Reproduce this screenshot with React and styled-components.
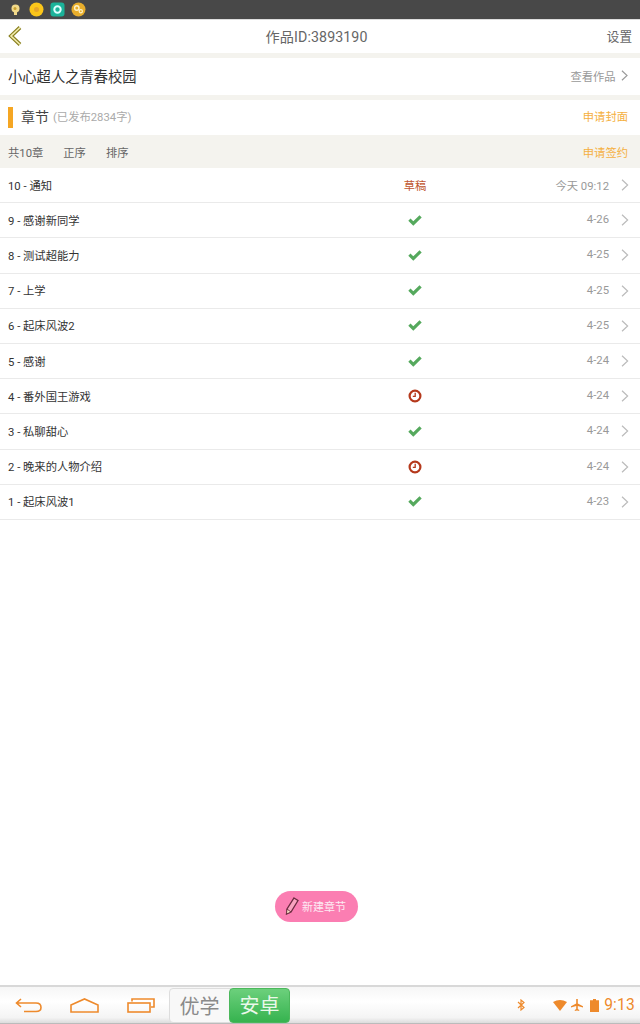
import React from "react";
import styled, { createGlobalStyle } from "styled-components";

const Global = createGlobalStyle`
  html, body { margin: 0; padding: 0; background: #fff; }
  body { font-family: Roboto, "Noto Sans CJK SC", sans-serif; }
`;
const Page = styled.div`
  width: 640px; height: 1024px; display: flex; flex-direction: column; overflow: hidden; background: #fff; position: relative;
`;
const StatusBar = styled.div`
  height: 19px; background: #484848; display: flex; align-items: center; gap: 6px; padding-left: 8px; box-sizing: border-box;
  flex: none;
`;
const NavBar = styled.div`
  height: 34px; flex: none; display: grid; grid-template-columns: 60px 1fr 67px; align-items: center; background: #fff;
  border-top: 1px solid #ddd; box-sizing: border-box; padding-bottom: 2px;
`;
const BackCell = styled.div`
  padding-left: 8px; display: flex; align-items: center;
`;
const NavTitle = styled.div`
  text-align: center; color: #666; font-size: 14.2px; letter-spacing: 0.1px;
`;
const NavAction = styled.div`
  text-align: right; padding-right: 8px; color: #666; font-size: 12.6px;
`;
const Band = styled.div`
  height: 5px; flex: none; background: #f4f3ee;
`;
const BookRow = styled.div`
  height: 37px; flex: none; display: flex; align-items: center; justify-content: space-between; padding: 0 12px 2px 8px; box-sizing: border-box;
`;
const BookTitle = styled.div`
  font-size: 14.3px; color: #333;
`;
const BookLink = styled.div`
  display: flex; align-items: center; gap: 5px; font-size: 11.3px; color: #999;
`;
const SectionHead = styled.div`
  height: 35px; flex: none; display: flex; align-items: center; padding: 0 12px 3px 8px; box-sizing: border-box;
`;
const Accent = styled.div`
  width: 5px; height: 21px; background: #f5a623; margin: 3px 8px 0 0;
`;
const SectionTitle = styled.span`
  font-size: 14px; color: #444;
`;
const SectionNote = styled.span`
  font-size: 11.3px; color: #aaa; margin-left: 4px; flex: 1;
`;
const Highlight = styled.span`
  font-size: 11.3px; color: #f5b041;
`;
const ToolHighlight = styled(Highlight)`
  margin-left: auto;
`;
const Toolbar = styled.div`
  height: 33px; flex: none; background: #f4f3ee; display: flex; align-items: center; padding: 0 12px 0 8px; box-sizing: border-box;
  font-size: 11.3px; color: #666; gap: 20px;
`;
const Row = styled.div`
  height: 35.2px; box-sizing: border-box; flex: none; display: grid; grid-template-columns: 364px 86px 1fr 31px; align-items: center;
  border-bottom: 1px solid #eaeaea; padding-left: 8px;
`;
const RowTitle = styled.div`
  font-size: 11.3px; color: #333; padding-bottom: 1px;
`;
const RowState = styled.div`
  display: flex; justify-content: center;
`;
const DraftLabel = styled.span`
  font-size: 11.3px; color: #c0562f; padding-bottom: 1px;
`;
const RowDate = styled.div`
  text-align: right; font-size: 11.3px; color: #999; padding-bottom: 1px;
`;
const RowChevron = styled.div`
  display: flex; justify-content: flex-end; padding-right: 11px;
`;
const Spacer = styled.div`
  flex: 1;
`;
const Fab = styled.div`
  position: absolute; left: 275px; top: 891px; width: 83px; height: 31px; border-radius: 16px; background: #fb7eb2;
  display: flex; align-items: center; gap: 3px; padding: 0 0 1px 10px; box-sizing: border-box; color: #fdeaf2; font-size: 11px;
`;
const BottomBar = styled.div`
  height: 39px; flex: none; display: flex; align-items: center; box-sizing: border-box; position: relative;
  border-top: 2px solid #d8d8d8; border-bottom: 1px solid #bbb;
  background: linear-gradient(#f6f6f6, #ffffff 40%, #f4f4f4 85%, #dcdcdc);
`;
const SysIcons = styled.div`
  display: flex; align-items: center; width: 169px; padding-left: 15px; box-sizing: border-box;
`;
const SysSlot = styled.div`
  width: 55px; display: flex; align-items: center;
`;
const SysLast = styled.div`
  margin-left: 2px; display: flex; align-items: center;
`;
const Switcher = styled.div`
  height: 35px; width: 121px; box-sizing: border-box; border: 1px solid #ddd; border-radius: 4px; display: flex; align-items: center;
  background: #f8f8f8; margin-top: 1px;
`;
const SwitchLabel = styled.div`
  width: 59px; text-align: center; font-size: 20px; color: #8a8a8a; flex: none;
`;
const SwitchActive = styled.div`
  width: 61px; height: 35px; text-align: center; line-height: 34px; font-size: 20px; color: #eaf8ea; flex: none; border-radius: 4px;
  background: linear-gradient(#6cd07c, #36b34f); border: 1px solid #4cb85c; box-sizing: border-box;
`;
const Tray = styled.div`
  margin-left: auto; display: flex; align-items: center; padding-right: 5px; color: #ee8a2c; font-size: 15.6px;
`;
const Clock = styled.span`
  margin-left: 5px; letter-spacing: 0.2px;
`;
const Chevron = ({ color = "#bbb", size = 12 }) => (
  <svg width={size * 0.67} height={size} viewBox="0 0 8 12" fill="none" stroke={color} strokeWidth="1.2"><path d="M1 0.8 L6.6 6 L1 11.2" /></svg>
);
const Check = () => (
  <svg width="14" height="11" viewBox="0 0 14 11" fill="#55a95d"><path d="M0.3 5.8 L2.5 3.6 L5.3 6.3 L11.5 0.3 L13.7 2.5 L5.3 10.7Z" /></svg>
);
const ClockIcon = () => (
  <svg width="14" height="14" viewBox="0 0 14 14" fill="none" stroke="#b5391c"><circle cx="7" cy="7" r="5.4" strokeWidth="2.2" /><path d="M7.2 3.8 V7.3 H4.8" strokeWidth="1.3" /></svg>
);
const rows = [
  ["10 - 通知", "draft", "今天 09:12"],
  ["9 - 感谢新同学", "ok", "4-26"],
  ["8 - 测试超能力", "ok", "4-25"],
  ["7 - 上学", "ok", "4-25"],
  ["6 - 起床风波2", "ok", "4-25"],
  ["5 - 感谢", "ok", "4-24"],
  ["4 - 番外国王游戏", "wait", "4-24"],
  ["3 - 私聊甜心", "ok", "4-24"],
  ["2 - 晚来的人物介绍", "wait", "4-24"],
  ["1 - 起床风波1", "ok", "4-23"],
];
export default function App() {
  return (
    <Page>
      <Global />
      <StatusBar>
        <svg width="15" height="15" viewBox="0 0 15 15"><circle cx="7.5" cy="6.5" r="4" fill="#f1d98a" /><rect x="6" y="10" width="3" height="3" fill="#f1d98a" /><circle cx="7" cy="6.5" r="1.5" fill="#c9a030" /></svg>
        <svg width="15" height="15" viewBox="0 0 15 15"><circle cx="7.5" cy="7.5" r="7" fill="#fbc61a" /><circle cx="7.5" cy="7.5" r="2.5" fill="#e5a52a" /></svg>
        <svg width="15" height="15" viewBox="0 0 15 15"><rect x="0.5" y="0.5" width="14" height="14" rx="3" fill="#1bb39a" /><circle cx="7.5" cy="7.5" r="3.2" fill="none" stroke="#dff" strokeWidth="2" /></svg>
        <svg width="15" height="15" viewBox="0 0 15 15"><circle cx="7.5" cy="7.5" r="7" fill="#e8ae2c" /><circle cx="5.8" cy="6" r="2.2" fill="none" stroke="#fff3c8" strokeWidth="1.4" /><circle cx="9.8" cy="9.3" r="1.6" fill="none" stroke="#fff3c8" strokeWidth="1.2" /></svg>
      </StatusBar>
      <NavBar>
        <BackCell>
          <svg width="14" height="20" viewBox="0 0 14 20" fill="none"><path d="M12 1.5 L3 10 L12 18.5" stroke="#8a8020" strokeWidth="3.8" /><path d="M12 1.5 L3 10 L12 18.5" stroke="#f3ecae" strokeWidth="1.6" /></svg>
        </BackCell>
        <NavTitle>作品ID:3893190</NavTitle>
        <NavAction>设置</NavAction>
      </NavBar>
      <Band />
      <BookRow>
        <BookTitle>小心超人之青春校园</BookTitle>
        <BookLink>查看作品<Chevron color="#999" size={11} /></BookLink>
      </BookRow>
      <Band />
      <SectionHead>
        <Accent />
        <SectionTitle>章节</SectionTitle>
        <SectionNote>(已发布2834字)</SectionNote>
        <Highlight>申请封面</Highlight>
      </SectionHead>
      <Toolbar>
        <span>共10章</span>
        <span>正序</span>
        <span>排序</span>
        <ToolHighlight>申请签约</ToolHighlight>
      </Toolbar>
      {rows.map(([t, s, d]) => (
        <Row key={t}>
          <RowTitle>{t}</RowTitle>
          <RowState>{s === "draft" ? <DraftLabel>草稿</DraftLabel> : s === "ok" ? <Check /> : <ClockIcon />}</RowState>
          <RowDate>{d}</RowDate>
          <RowChevron><Chevron /></RowChevron>
        </Row>
      ))}
      <Spacer />
      <Fab>
        <svg width="14" height="18" viewBox="0 0 14 18"><path d="M9 1 L13 3.5 L6 15 L1.5 17 L2 12Z" fill="#f9a3bf" stroke="#6b2b40" strokeWidth="1.3" /><path d="M2 12 L6 15 L1.5 17Z" fill="#fbe3c8" stroke="#6b2b40" strokeWidth="0.9" /></svg>
        新建章节
      </Fab>
      <BottomBar>
        <SysIcons>
          <SysSlot>
            <svg width="27" height="15" viewBox="0 0 27 15" fill="none" stroke="#ee8a2c" strokeWidth="1.6"><path d="M6 1 L1.5 5 L6 9 M1.5 5 H21 Q26 5 26 9.5 Q26 13.5 21 13.5 H9" /></svg>
          </SysSlot>
          <SysSlot>
            <svg width="29" height="15" viewBox="0 0 29 15" fill="none" stroke="#ee8a2c" strokeWidth="1.6"><path d="M1 7 L14.5 1 L28 7 V14 H1Z" /></svg>
          </SysSlot>
          <SysLast>
            <svg width="28" height="15" viewBox="0 0 28 15" fill="none" stroke="#ee8a2c" strokeWidth="1.6"><path d="M5 3.5 V1 H27 V9 H24" /><rect x="1" y="5" width="22" height="9" /></svg>
          </SysLast>
        </SysIcons>
        <Switcher>
          <SwitchLabel>优学</SwitchLabel>
          <SwitchActive>安卓</SwitchActive>
        </Switcher>
        <Tray>
          <svg width="8" height="12" viewBox="0 0 8 12" fill="none" stroke="#ee8a2c" strokeWidth="1.2" style={{ marginRight: 28 }}><path d="M1 3 L7 8.5 L4 11 V1 L7 3.5 L1 9" /></svg>
          <svg width="14" height="11" viewBox="0 0 14 11" fill="#ee8a2c" style={{ marginRight: 4 }}><path d="M0 2 Q7 -2 14 2 L7 11Z" /></svg>
          <svg width="12" height="12" viewBox="0 0 12 12" fill="#ee8a2c" style={{ marginRight: 7 }}><path d="M5.2 0 H6.8 V4.5 L12 7.3 V8.5 L6.8 7 V10 L8.2 11 V12 L6 11.4 L3.8 12 V11 L5.2 10 V7 L0 8.5 V7.3 L5.2 4.5Z" /></svg>
          <svg width="9" height="13" viewBox="0 0 9 13" fill="#ee8a2c"><path d="M3 0 H6 V1.2 H9 V13 H0 V1.2 H3Z" /></svg>
          <Clock>9:13</Clock>
        </Tray>
      </BottomBar>
    </Page>
  );
}
